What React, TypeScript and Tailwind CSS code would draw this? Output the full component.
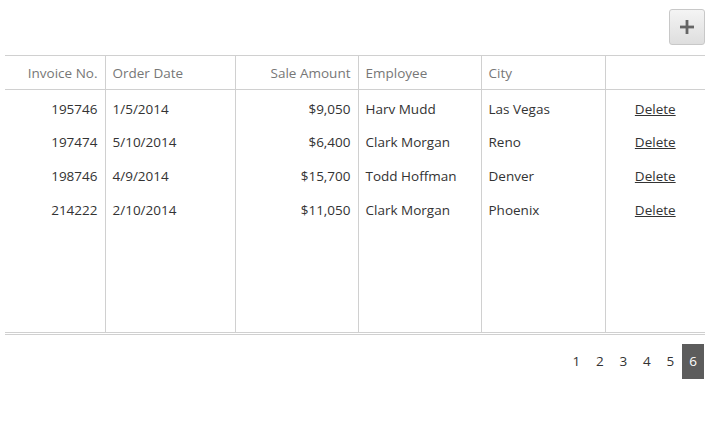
import { Plus } from 'lucide-react';

const rows = [
  { invoice: '195746', date: '1/5/2014', amount: '$9,050', employee: 'Harv Mudd', city: 'Las Vegas' },
  { invoice: '197474', date: '5/10/2014', amount: '$6,400', employee: 'Clark Morgan', city: 'Reno' },
  { invoice: '198746', date: '4/9/2014', amount: '$15,700', employee: 'Todd Hoffman', city: 'Denver' },
  { invoice: '214222', date: '2/10/2014', amount: '$11,050', employee: 'Clark Morgan', city: 'Phoenix' },
];

const cell = 'border-l border-[#d0d0d0] first:border-l-0 px-[7px] h-[34px] pb-0';
const head = `${cell} pt-[2px] font-normal`;
const body = `${cell} pt-[4px]`;
const filler = 'border-l border-[#d0d0d0] first:border-l-0 h-[106px] p-0';

const App = () => (
  <div className="w-[720px] h-[444px] bg-white text-[13.5px] text-[#333]" style={{ fontFamily: '"Open Sans", "Noto Sans", sans-serif' }}>
    <div className="flex justify-end pt-[9px] pr-[15px] pb-[10px]">
      <button className="w-[36px] h-[36px] flex items-center justify-center rounded-[3px] border border-[#c8c8c8] bg-gradient-to-b from-[#f4f4f4] to-[#dedede]">
        <Plus size={24} strokeWidth={2.8} className="text-[#666]" strokeLinecap="butt" />
      </button>
    </div>
    <div className="mx-[5px] w-[700px]">
      <table className="w-full table-fixed border-collapse border-t border-[#d0d0d0]">
        <colgroup>
          <col className="w-[100px]" />
          <col className="w-[130px]" />
          <col className="w-[123px]" />
          <col className="w-[123px]" />
          <col className="w-[124px]" />
          <col className="w-[100px]" />
        </colgroup>
        <thead>
          <tr className="border-b border-[#d0d0d0] text-[#777]">
            <th className={`${head} text-right`}>Invoice No.</th>
            <th className={`${head} text-left`}>Order Date</th>
            <th className={`${head} text-right`}>Sale Amount</th>
            <th className={`${head} text-left`}>Employee</th>
            <th className={`${head} text-left`}>City</th>
            <th className={head}></th>
          </tr>
        </thead>
        <tbody>
          {rows.map((r) => (
            <tr key={r.invoice}>
              <td className={`${body} text-right`}>{r.invoice}</td>
              <td className={body}>{r.date}</td>
              <td className={`${body} text-right`}>{r.amount}</td>
              <td className={body}>{r.employee}</td>
              <td className={body}>{r.city}</td>
              <td className={`${body} text-center`}>
                <a href="#" className="underline text-[#333]">Delete</a>
              </td>
            </tr>
          ))}
          <tr>
            <td className={filler}></td>
            <td className={filler}></td>
            <td className={filler}></td>
            <td className={filler}></td>
            <td className={filler}></td>
            <td className={filler}></td>
          </tr>
        </tbody>
      </table>
      <div className="border-t-[3px] border-double border-[#d0d0d0]" />
      <div className="flex justify-end mt-[9px] pr-[1px]">
        {[1, 2, 3, 4, 5, 6].map((n) => (
          <span
            key={n}
            className={`h-[35px] flex items-center justify-center ${n === 6 ? 'w-[22px] bg-[#5c5c5c] text-white' : 'w-[23.5px] text-[#333]'}`}
          >
            {n}
          </span>
        ))}
      </div>
    </div>
  </div>
);

export default App;
